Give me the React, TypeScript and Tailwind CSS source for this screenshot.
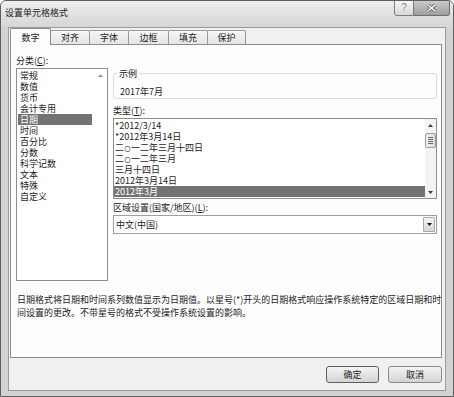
import React from "react";

function Tri({ down, color, w = 7, h = 4 }: { down?: boolean; color: string; w?: number; h?: number }) {
  return (
    <svg width={w} height={h} viewBox={`0 0 ${w} ${h}`}>
      <path d={down ? `M0 0H${w}L${w / 2} ${h}Z` : `M0 ${h}H${w}L${w / 2} 0Z`} fill={color} />
    </svg>
  );
}

const categories = ["常规", "数值", "货币", "会计专用", "日期", "时间", "百分比", "分数", "科学记数", "文本", "特殊", "自定义"];
const Zero = () => <span className="text-[6px] leading-[6px] px-[0.5px]">〇</span>;
const types: React.ReactNode[] = [
  "*2012/3/14",
  "*2012年3月14日",
  <>二<Zero />一二年三月十四日</>,
  <>二<Zero />一二年三月</>,
  "三月十四日",
  "2012年3月14日",
  "2012年3月",
];
const tabs = [
  { t: "数字", w: "w-[41px]" },
  { t: "对齐", w: "w-[40px]" },
  { t: "字体", w: "w-[40px]" },
  { t: "边框", w: "w-[41px]" },
  { t: "填充", w: "w-[40px]" },
  { t: "保护", w: "w-[39px]" },
];

export default function App() {
  return (
    <div className="w-[454px] h-[397px] flex flex-col bg-[#d2d2d2] border border-[#5e5e5e] rounded-t-[6px] font-['Noto_Sans_CJK_SC',sans-serif] text-[9px] leading-[11px] text-[#1c1c1c] overflow-hidden">
      {/* title bar */}
      <div className="h-[26px] flex items-start justify-between bg-gradient-to-b from-[#ededed] to-[#d6d6d6]">
        <span className="mt-[6px] ml-[4px] text-[9px] leading-[11px] text-[#222]">设置单元格格式</span>
        <div className="flex mr-[3px] -mt-[1px]">
          <div className="w-[20px] h-[16px] flex items-center justify-center border border-[#7d7d7d] rounded-bl-[3px] bg-gradient-to-b from-[#f6f6f6] to-[#d9d9d9] text-[#8a8a8a] text-[10px] leading-[10px] font-['Liberation_Sans',sans-serif]">
            ?
          </div>
          <div className="w-[36px] h-[16px] flex items-center justify-center border border-l-0 border-[#6e6e6e] rounded-br-[3px] bg-gradient-to-b from-[#c9c9c9] to-[#9e9e9e]">
            <svg width="9" height="8" viewBox="0 0 9 8">
              <path d="M1 1L8 7M8 1L1 7" stroke="#5a5a5a" strokeWidth="3" />
              <path d="M1 1L8 7M8 1L1 7" stroke="#ffffff" strokeWidth="1.6" />
            </svg>
          </div>
        </div>
      </div>

      {/* client area */}
      <div className="flex-1 mx-[7px] mb-[5px] flex flex-col bg-[#f0f0f0] border border-[#9a9a9a] pl-[1px]">
        {/* tabs */}
        <div className="h-[16px] flex items-end">
          {tabs.map((tab, i) =>
            i === 0 ? (
              <div
                key={tab.t}
                className={`${tab.w} h-[17px] -mb-[1px] relative z-10 flex items-center justify-center bg-[#fdfdfd] border border-b-0 border-[#8c8c8c] rounded-t-[2px]`}
              >
                {tab.t}
              </div>
            ) : (
              <div
                key={tab.t}
                className={`${tab.w} h-[14px] -ml-[1px] flex items-center justify-center bg-gradient-to-b from-[#f7f7f7] to-[#e4e4e4] border border-b-0 border-[#9a9a9a] rounded-t-[2px]`}
              >
                {tab.t}
              </div>
            )
          )}
        </div>

        {/* panel */}
        <div className="w-[432px] h-[314px] bg-[#fdfdfd] border border-[#8c8c8c] pt-[10px] pl-[5px] pr-[4px] flex flex-col">
          <div className="h-[11px]">
            分类(<span className="underline">C</span>):
          </div>
          <div className="mt-[2px] flex gap-[5px]">
            {/* category list */}
            <div className="w-[92px] h-[213px] border border-[#8e8e8e] bg-white flex">
              <div className="flex-1 flex flex-col pt-[1px]">
                {categories.map((c) => (
                  <div
                    key={c}
                    className={`h-[11px] mx-[1px] pl-[2px] whitespace-nowrap ${c === "日期" ? "bg-[#737373] text-white" : ""}`}
                  >
                    {c}
                  </div>
                ))}
              </div>
              <div className="w-[14px] flex flex-col items-center pt-[5px]">
                <Tri color="#9a9a9a" w={5} h={3} />
              </div>
            </div>

            {/* right column */}
            <div className="w-[324px] flex flex-col">
              <div className="relative mt-[5px] h-[26px] border border-[#dadada] rounded-[3px] pl-[6px] pt-[12px]">
                <span className="absolute -top-[6px] left-[3px] px-[2px] bg-[#fdfdfd]">示例</span>
                <span>2017年7月</span>
              </div>
              <div className="mt-[6px] h-[11px]">
                类型(<span className="underline">T</span>):
              </div>
              <div className="mt-[2px] h-[81px] border border-[#8e8e8e] bg-white flex">
                <div className="flex-1 flex flex-col pt-[1px]">
                  {types.map((t, i) => (
                    <div
                      key={i}
                      className={`h-[11px] pl-[1px] whitespace-nowrap ${i === types.length - 1 ? "bg-[#737373] text-white" : ""}`}
                    >
                      {t}
                    </div>
                  ))}
                </div>
                <div className="w-[11px] flex flex-col bg-[#f4f4f4]">
                  <div className="h-[12px] flex items-center justify-center">
                    <Tri color="#3c3c3c" w={5} h={3} />
                  </div>
                  <div className="mt-[2px] h-[15px] border border-[#9a9a9a] rounded-[2px] bg-gradient-to-r from-[#f2f2f2] to-[#dcdcdc] flex flex-col items-center justify-center gap-[1px]">
                    <div className="w-[5px] h-[1px] bg-[#6a6a6a]" />
                    <div className="w-[5px] h-[1px] bg-[#6a6a6a]" />
                    <div className="w-[5px] h-[1px] bg-[#6a6a6a]" />
                    <div className="w-[5px] h-[1px] bg-[#6a6a6a]" />
                  </div>
                  <div className="flex-1" />
                  <div className="h-[12px] flex items-center justify-center">
                    <Tri down color="#3c3c3c" w={5} h={3} />
                  </div>
                </div>
              </div>
              <div className="mt-[3px] h-[11px] whitespace-nowrap">
                区域设置(国家/地区)(<span className="underline">L</span>):
              </div>
              <div className="mt-[2px] h-[19px] border border-[#a0a0a0] bg-white flex items-stretch">
                <div className="flex-1 pl-[2px] flex items-center">中文(中国)</div>
                <div className="w-[12px] m-[1px] border border-[#a8a8a8] rounded-[1px] bg-gradient-to-b from-[#f4f4f4] to-[#d6d6d6] flex items-center justify-center">
                  <Tri down color="#111" w={5} h={3} />
                </div>
              </div>
            </div>
          </div>
          <div className="mt-[13px] pl-[1px] leading-[12.5px] whitespace-nowrap">
            <div>日期格式将日期和时间系列数值显示为日期值。以星号(*)开头的日期格式响应操作系统特定的区域日期和时</div>
            <div>间设置的更改。不带星号的格式不受操作系统设置的影响。</div>
          </div>
        </div>

        {/* buttons */}
        <div className="w-[432px] mt-[8px] flex justify-end gap-[9px]">
          <div className="w-[53px] h-[17px] flex items-center justify-center border border-[#5f5f5f] rounded-[3px] bg-gradient-to-b from-[#f4f4f4] to-[#d4d4d4]">
            确定
          </div>
          <div className="w-[54px] h-[17px] flex items-center justify-center border border-[#8a8a8a] rounded-[3px] bg-gradient-to-b from-[#f4f4f4] to-[#d4d4d4]">
            取消
          </div>
        </div>
      </div>
    </div>
  );
}
